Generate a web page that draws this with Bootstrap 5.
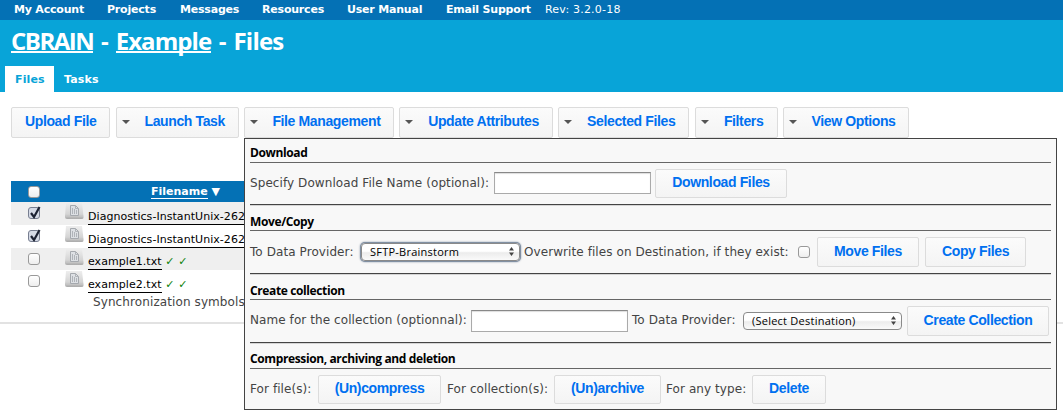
<!DOCTYPE html>
<html lang="en">
<head>
<meta charset="utf-8">
<meta name="viewport" content="width=device-width, initial-scale=1">
<title>CBRAIN - Example - Files</title>
<link rel="stylesheet" href="https://cdn.jsdelivr.net/npm/bootstrap@5.3.0/dist/css/bootstrap.min.css">
<style>
body{font-family:"DejaVu Sans",sans-serif;font-size:12px;line-height:16px;color:#444;height:416px;overflow:hidden;background:#fff}
.topbar{background:#0471b5;height:20px;font-size:11px;line-height:20px;display:grid;grid-template-columns:93px 73px 82px 85px 99px 99px 90px;padding-left:14px;white-space:nowrap}
.topbar a{color:#fff;text-decoration:none;font-weight:700;letter-spacing:-.2px}
.topbar span{color:#fff;letter-spacing:.2px}
.banner{background:#08a4d8;height:72px}
.banner h1{font:700 24px/30px "Open Sans",sans-serif;color:#fff;margin:0;padding:6px 0 0 11px;height:46px;letter-spacing:-.8px;white-space:nowrap;word-spacing:2.300px}
.banner h1 a{color:#fff;text-decoration:none;display:inline-block;height:27px;border-bottom:2px solid #fff;letter-spacing:-.95px}
.banner h1 a:first-child{letter-spacing:-1.500px}
.tabset{padding-left:5px}
.tabset a{height:26px;line-height:28px;padding:0 10px;font-size:11px;letter-spacing:.15px;font-weight:700;color:#fff;text-decoration:none}
.tabset a.active{background:#fff;color:#08a4d8;width:49px}
.tools{display:grid;grid-template-columns:99.4px 122.9px 149.7px 153.7px 131px 83px 126px;column-gap:5.400px;padding:15px 0 0 11px;height:89px}
.gbtn{font:700 14px/16px "Liberation Sans",sans-serif;letter-spacing:-.37px;color:#0070f0;background:linear-gradient(#fbfbfb,#f4f4f4);border:1px solid #dcdcdc;border-radius:2px;padding:0 0 2px;height:31px;white-space:nowrap;display:flex;align-items:center;justify-content:center}
.tools .gbtn{padding-bottom:3px}
.has-menu{position:relative;padding-left:15px}
.has-menu::before{content:"";position:absolute;left:5px;top:12px;border:4px solid transparent;border-top-color:#555;border-bottom:0}
.files{width:233px;overflow:hidden;margin-left:11px;color:#000}
.files .line{display:grid;grid-template-columns:54px 23px 156px;height:23px}
.files .line:nth-child(4){height:22px}
.files .odd{background:#efefef}
.files .thead-line{background:#0471b5;height:21px;grid-template-columns:140px auto}
.thead-line b{color:#fff;font-size:11px;line-height:22px}
.thead-line b u{text-decoration:none;border-bottom:1px solid #fff}
.fname{font-size:11px;line-height:16px;padding-top:6px;white-space:nowrap;overflow:hidden;letter-spacing:.05px}
.line:nth-child(2) .fname,.line:nth-child(3) .fname,.line:nth-child(5) .fname{padding-top:7px}
.fname u{text-decoration:none;box-shadow:0 1px #000;display:inline-block;height:14px;line-height:14px}
.ok{color:#078007;font-size:11px;font-weight:700;letter-spacing:.1px}
.ck{width:12px;height:12px;border:1px solid #999;border-radius:3px;background:linear-gradient(#fff,#eee);display:block}
.files .ck{margin:5px 0 0 17px}
.ck.on{background:#d5dae6;border-color:#777e90}
.ck svg{display:block;overflow:visible}
.legend-line{padding:2px 0 0 93px;color:#444;letter-spacing:.1px;line-height:15px}
.sep{border-top:2px solid #e2e2e2;margin-top:12px}
.panel{position:absolute;left:244px;top:138px;width:813px;height:272px;border:1px solid #444;background:#f8f8f8;padding:0 5px;z-index:5;white-space:nowrap}
.panel h2{font:700 12px/16px "Open Sans",sans-serif;color:#000;margin:0;height:25px;padding-top:8px;border-bottom:1px solid #666;letter-spacing:-.38px}
.panel section:first-child h2{height:24px;padding-top:6px}
.panel section:last-child h2{padding-top:7px}
.frow{display:grid;align-items:center;height:44px;padding-bottom:1px;letter-spacing:.08px}
.ruled{border-bottom:1px solid #d5d5d5;box-shadow:inset 0 -1px #444}
.frow .gbtn{height:30px}
.frow.r1 .gbtn,.frow.r4 .gbtn{height:29px;padding-bottom:3px}
.r1{height:43px;grid-template-columns:244px 157px 4px 132px}
.r1>span:first-child,.r3>span:not(.txt):not(.pick),.r4>span{padding-bottom:2px}
.r2{grid-template-columns:111px 159px 4px 274px 19px 102px 6px 101px}
.r3{grid-template-columns:221px 157px 4px 111px 159px 5px 142px}
.r4{height:40px;padding:1px 0 0;grid-template-columns:68px 123px 6px 107px 107px 5px 86px 74px}
.txt{height:22px;border:1px solid #aaa;border-top-color:#888;background:#fff;box-shadow:inset 0 1px 1px #ddd}
.r1 .txt{margin-bottom:1px}
.pick{height:18px;border:1px solid #8a8a8a;border-radius:4px;background:linear-gradient(#fff 45%,#ececec 55%,#fafafa);font:11px/16px "Open Sans",sans-serif;letter-spacing:.24px;color:#000;padding:0 4px 1px 8px;display:flex;justify-content:space-between;align-items:center}
.pick.hot{box-shadow:0 0 0 1px #8190a3,0 0 2px 1px #8190a3}
</style>
</head>
<body>
<nav class="topbar"><a href="#">My Account</a><a href="#">Projects</a><a href="#">Messages</a><a href="#">Resources</a><a href="#">User Manual</a><a href="#">Email Support</a><span>Rev: 3.2.0-18</span></nav>
<header class="banner">
<h1><a href="#">CBRAIN</a> - <a href="#">Example</a> - Files</h1>
<div class="tabset d-flex"><a class="active" href="#">Files</a><a href="#">Tasks</a></div>
</header>
<div class="tools">
<button class="gbtn">Upload File</button><button class="gbtn has-menu">Launch Task</button><button class="gbtn has-menu">File Management</button><button class="gbtn has-menu">Update Attributes</button><button class="gbtn has-menu">Selected Files</button><button class="gbtn has-menu">Filters</button><button class="gbtn has-menu">View Options</button>
</div>
<svg width="0" height="0" class="position-absolute"><defs>
<linearGradient id="disk" x2="0" y2="1"><stop stop-color="#eee"/><stop offset=".7" stop-color="#d4d4d4"/><stop offset="1" stop-color="#aaa"/></linearGradient>
<g id="doc"><path d="M1 0h16l1.500 13v1.500q0 1.500-2 1.500H2q-2 0-2-2v-1z" fill="url(#disk)"/><path d="M.5 13.500h17.500" stroke="#c4c4c4"/><path d="M5.500 2.500h5l3 3v7h-8z" fill="#dde0e4" stroke="#a5a9ae"/><path d="M10.500 2.500v3h3M7.500 5v6M9.500 6v5M11.500 7v4" fill="none" stroke="#b0b4b9"/></g>
<path id="tick" d="M2 5l3 4L10.500-1" fill="none" stroke="#1c2233" stroke-width="2.200"/>
</defs></svg>
<main>
<div class="files">
<div class="line thead-line"><span class="ck"></span><b><u>Filename</u> ▼</b></div>
<div class="line odd"><span class="ck on"><svg width="10" height="10"><use href="#tick"/></svg></span><svg width="19" height="18"><use href="#doc" y="1"/></svg><div class="fname"><u>Diagnostics-InstantUnix-262</u></div></div>
<div class="line"><span class="ck on"><svg width="10" height="10"><use href="#tick"/></svg></span><svg width="19" height="18"><use href="#doc" y="1"/></svg><div class="fname"><u>Diagnostics-InstantUnix-262</u></div></div>
<div class="line odd"><span class="ck"></span><svg width="19" height="18"><use href="#doc" y="1"/></svg><div class="fname"><u>example1.txt</u> <span class="ok">✓ ✓</span></div></div>
<div class="line"><span class="ck"></span><svg width="19" height="18"><use href="#doc" y="1"/></svg><div class="fname"><u>example2.txt</u> <span class="ok">✓ ✓</span></div></div>
</div>
<div class="legend-line">Synchronization symbols</div>
<div class="sep"></div>
</main>
<div class="panel">
<section><h2>Download</h2><div class="frow ruled r1"><span>Specify Download File Name (optional):</span><span class="txt"></span><i></i><button class="gbtn">Download Files</button></div></section>
<section><h2>Move/Copy</h2><div class="frow ruled r2"><span>To Data Provider:</span><span class="pick hot">SFTP-Brainstorm<svg width="7" height="10"><path d="M3.500 0L6 3.500H1zM3.500 9L1 5.500h5z" fill="#444"/></svg></span><i></i><span>Overwrite files on Destination, if they exist:</span><span class="ck"></span><button class="gbtn">Move Files</button><i></i><button class="gbtn">Copy Files</button></div></section>
<section><h2>Create collection</h2><div class="frow ruled r3"><span>Name for the collection (optionnal):</span><span class="txt"></span><i></i><span>To Data Provider:</span><span class="pick">(Select Destination)<svg width="7" height="10"><path d="M3.500 0L6 3.500H1zM3.500 9L1 5.500h5z" fill="#444"/></svg></span><i></i><button class="gbtn">Create Collection</button></div></section>
<section><h2>Compression, archiving and deletion</h2><div class="frow r4"><span>For file(s):</span><button class="gbtn">(Un)compress</button><i></i><span>For collection(s):</span><button class="gbtn">(Un)archive</button><i></i><span>For any type:</span><button class="gbtn">Delete</button></div></section>
</div>
<script src="https://cdn.jsdelivr.net/npm/bootstrap@5.3.0/dist/js/bootstrap.bundle.min.js"></script>
</body>
</html>
